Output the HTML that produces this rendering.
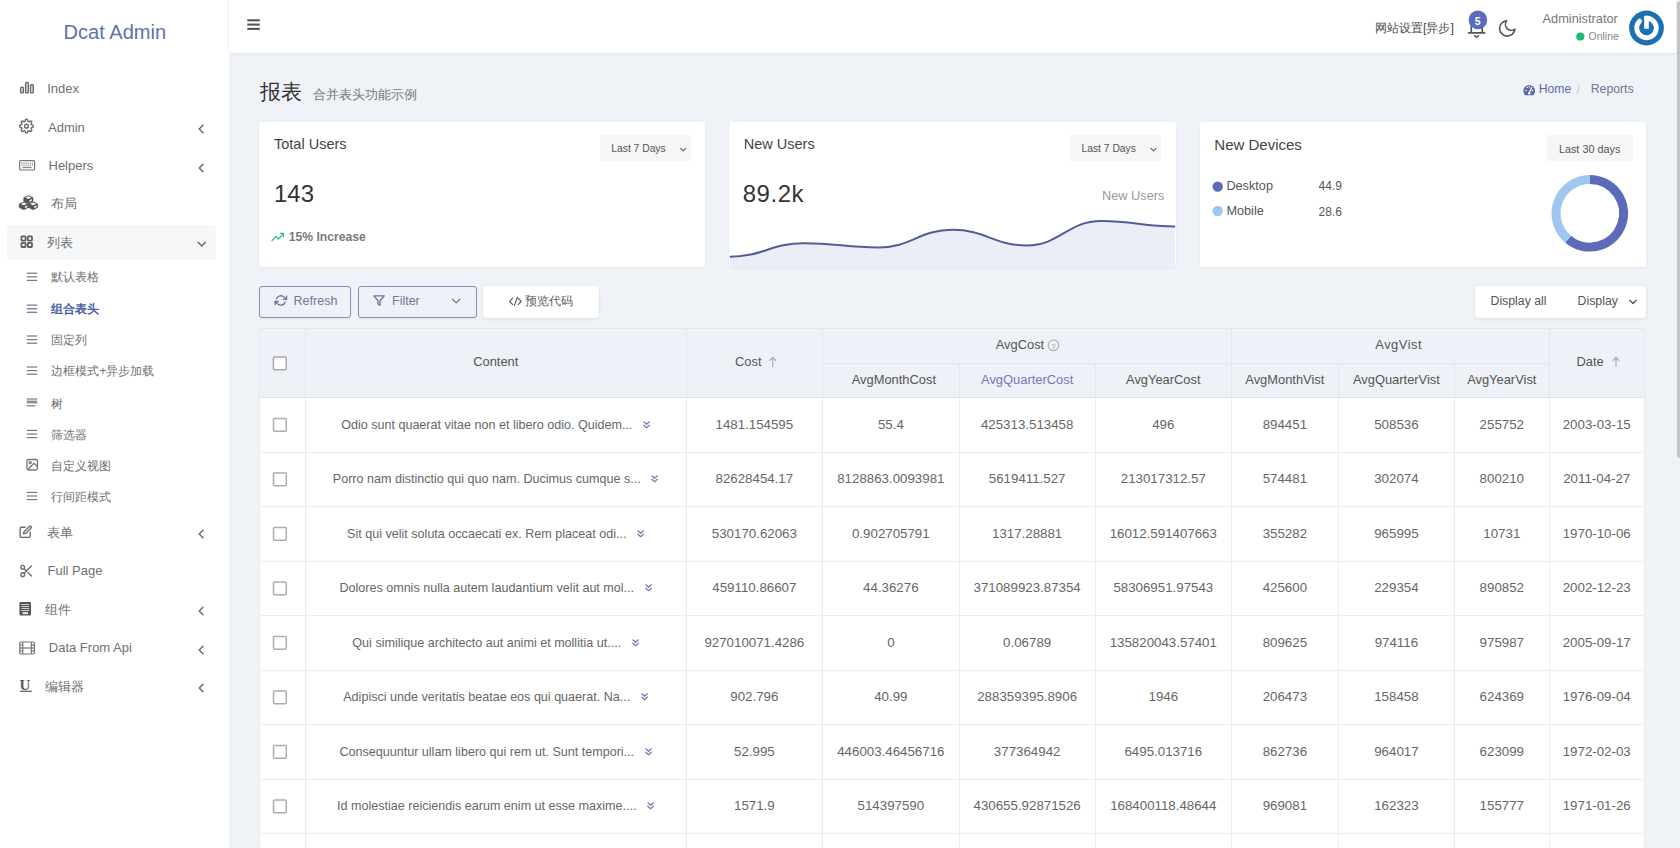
<!DOCTYPE html>
<html><head><meta charset="utf-8"><style>
*{box-sizing:border-box;margin:0;padding:0}
html,body{width:1680px;height:848px;overflow:hidden}
body{font-family:"Liberation Sans",sans-serif;background:#eff2f7;color:#666;position:relative}
.t{position:absolute;line-height:1;white-space:nowrap}
.tr{position:absolute;line-height:1;white-space:nowrap;text-align:right}
.tc{position:absolute;line-height:1;white-space:nowrap;text-align:center}
#side{position:absolute;left:0;top:0;width:229px;height:848px;background:#fff}
.hl{position:absolute;left:7px;top:225px;width:209px;height:35px;background:#f6f7f9;border-radius:3px}
#nav{position:absolute;left:229px;top:0;width:1447px;height:53px;background:#fff;box-shadow:0 1px 2px rgba(40,50,80,.07)}
#sb{position:absolute;left:1676.5px;top:1px;width:3.5px;height:457px;background:#c4c5c8;border-radius:3px 0 0 3px}
.card{position:absolute;top:122px;height:145px;width:446.3px;background:#fff;border-radius:3px;box-shadow:0 1px 3px rgba(40,50,80,.06)}
.dd{position:absolute;height:25.5px;background:#f6f6f6;border-radius:2px}
.btn{position:absolute;top:286px;height:31.5px;border-radius:3px}
svg{position:absolute;left:0;top:0;overflow:visible}
</style></head><body>
<div id="side"><div class="hl"></div>
<div class="t" style="left:63.5px;top:21.79px;font-size:20.1px;color:#6472a8;font-weight:normal;">Dcat Admin</div>
<div class="t" style="left:47.2px;top:81.80px;font-size:13px;color:#707070;font-weight:normal;">Index</div>
<div class="t" style="left:48px;top:120.50px;font-size:13px;color:#707070;font-weight:normal;">Admin</div>
<div class="t" style="left:48.5px;top:159.00px;font-size:13px;color:#707070;font-weight:normal;">Helpers</div>
<div class="t" style="left:51.3px;top:197.00px;font-size:13px;color:#707070;font-weight:normal;">布局</div>
<div class="t" style="left:47.2px;top:235.50px;font-size:13px;color:#707070;font-weight:normal;">列表</div>
<div class="t" style="left:46.6px;top:526.00px;font-size:13px;color:#707070;font-weight:normal;">表单</div>
<div class="t" style="left:47.5px;top:564.30px;font-size:13px;color:#707070;font-weight:normal;">Full Page</div>
<div class="t" style="left:44.9px;top:602.50px;font-size:13px;color:#707070;font-weight:normal;">组件</div>
<div class="t" style="left:48.8px;top:640.70px;font-size:13px;color:#707070;font-weight:normal;">Data From Api</div>
<div class="t" style="left:44.9px;top:680.00px;font-size:13px;color:#707070;font-weight:normal;">编辑器</div>
<div class="t" style="left:51.3px;top:271.47px;font-size:12.2px;color:#707070;font-weight:normal;">默认表格</div>
<div class="t" style="left:51.3px;top:303.37px;font-size:12.2px;color:#4a5fa6;font-weight:bold;">组合表头</div>
<div class="t" style="left:51.3px;top:334.27px;font-size:12.2px;color:#707070;font-weight:normal;">固定列</div>
<div class="t" style="left:51.3px;top:365.27px;font-size:12.2px;color:#707070;font-weight:normal;">边框模式+异步加载</div>
<div class="t" style="left:51.3px;top:397.67px;font-size:12.2px;color:#707070;font-weight:normal;">树</div>
<div class="t" style="left:51.3px;top:428.67px;font-size:12.2px;color:#707070;font-weight:normal;">筛选器</div>
<div class="t" style="left:51.3px;top:459.67px;font-size:12.2px;color:#707070;font-weight:normal;">自定义视图</div>
<div class="t" style="left:51.3px;top:490.67px;font-size:12.2px;color:#707070;font-weight:normal;">行间距模式</div>
<svg width="229" height="848"><g fill="none" stroke="#6b6b6b" stroke-width="1.5" stroke-linecap="round" stroke-linejoin="round"><rect x="20.7" y="87.3" width="2.6" height="5.5" rx="0.8"/><rect x="25.7" y="82.4" width="2.6" height="10.4" rx="0.8"/><rect x="30.6" y="84.8" width="2.6" height="8" rx="0.8"/></g><g transform="translate(19,118.7) scale(0.625)" fill="none" stroke="#6b6b6b" stroke-width="2.3" stroke-linecap="round" stroke-linejoin="round"><circle cx="12" cy="12" r="3"/><path d="M19.4 15a1.65 1.65 0 0 0 .33 1.820l.06.06a2 2 0 0 1 0 2.83 2 2 0 0 1-2.83 0l-.06-.06a1.65 1.65 0 0 0-1.820-.33 1.65 1.65 0 0 0-1 1.51V21a2 2 0 0 1-2 2 2 2 0 0 1-2-2v-.09A1.65 1.65 0 0 0 9 19.4a1.65 1.65 0 0 0-1.820.33l-.06.06a2 2 0 0 1-2.830 0 2 2 0 0 1 0-2.830l.06-.06a1.65 1.65 0 0 0 .33-1.820 1.65 1.65 0 0 0-1.51-1H3a2 2 0 0 1-2-2 2 2 0 0 1 2-2h.09A1.65 1.65 0 0 0 4.6 9a1.65 1.65 0 0 0-.33-1.820l-.06-.06a2 2 0 0 1 0-2.830 2 2 0 0 1 2.830 0l.06.06a1.65 1.65 0 0 0 1.820.33H9a1.65 1.65 0 0 0 1-1.51V3a2 2 0 0 1 2-2 2 2 0 0 1 2 2v.09a1.65 1.65 0 0 0 1 1.51 1.65 1.65 0 0 0 1.820-.33l.06-.06a2 2 0 0 1 2.830 0 2 2 0 0 1 0 2.830l-.06.06a1.65 1.65 0 0 0-.33 1.820V9a1.65 1.65 0 0 0 1.51 1H21a2 2 0 0 1 2 2 2 2 0 0 1-2 2h-.09a1.65 1.65 0 0 0-1.51 1z"/></g><g fill="none" stroke="#777" stroke-width="1.2"><rect x="19.6" y="160.6" width="15" height="9.4" rx="1"/></g><g fill="#888"><rect x="21.3" y="162.6" width="1.3" height="1.1"/><rect x="23.4" y="162.6" width="1.3" height="1.1"/><rect x="25.5" y="162.6" width="1.3" height="1.1"/><rect x="27.6" y="162.6" width="1.3" height="1.1"/><rect x="29.7" y="162.6" width="1.3" height="1.1"/><rect x="31.8" y="162.6" width="1.3" height="1.1"/><rect x="21.3" y="164.6" width="1.3" height="1.1"/><rect x="23.4" y="164.6" width="1.3" height="1.1"/><rect x="25.5" y="164.6" width="1.3" height="1.1"/><rect x="27.6" y="164.6" width="1.3" height="1.1"/><rect x="29.7" y="164.6" width="1.3" height="1.1"/><rect x="31.8" y="164.6" width="1.3" height="1.1"/><rect x="22.5" y="166.8" width="9" height="1.3"/></g><path d="M23.8 197.6 L28.4 195.4 L33.0 197.6 L33.0 201.20000000000002 L28.4 203.4 L23.8 201.20000000000002Z" fill="#555" stroke="#555" stroke-width="0.6" stroke-linejoin="round"/><path d="M25.400000000000002 197.6 L28.4 196.3 L31.4 197.6 L28.4 198.9Z" fill="#fff"/><path d="M29.5 200.2 L31.9 199.1 L31.9 200.60000000000002 L29.5 201.9Z" fill="#fff"/><path d="M19.2 203.89999999999998 L23.799999999999997 201.7 L28.4 203.89999999999998 L28.4 207.5 L23.799999999999997 209.7 L19.2 207.5Z" fill="#555" stroke="#555" stroke-width="0.6" stroke-linejoin="round"/><path d="M20.8 203.89999999999998 L23.799999999999997 202.6 L26.799999999999997 203.89999999999998 L23.799999999999997 205.2Z" fill="#fff"/><path d="M24.9 206.49999999999997 L27.299999999999997 205.39999999999998 L27.299999999999997 206.9 L24.9 208.2Z" fill="#fff"/><path d="M28.5 203.89999999999998 L33.1 201.7 L37.7 203.89999999999998 L37.7 207.5 L33.1 209.7 L28.5 207.5Z" fill="#555" stroke="#555" stroke-width="0.6" stroke-linejoin="round"/><path d="M30.1 203.89999999999998 L33.1 202.6 L36.1 203.89999999999998 L33.1 205.2Z" fill="#fff"/><path d="M34.2 206.49999999999997 L36.6 205.39999999999998 L36.6 206.9 L34.2 208.2Z" fill="#fff"/><g fill="none" stroke="#5f5f5f" stroke-width="1.8"><rect x="21.4" y="236.4" width="4.2" height="4.2" rx="0.8"/><rect x="27.8" y="236.4" width="4.2" height="4.2" rx="0.8"/><rect x="21.4" y="242.8" width="4.2" height="4.2" rx="0.8"/><rect x="27.8" y="242.8" width="4.2" height="4.2" rx="0.8"/></g><g stroke="#777" stroke-width="1.2"><line x1="26.8" y1="273.2" x2="37.2" y2="273.2"/><line x1="26.8" y1="276.8" x2="37.2" y2="276.8"/><line x1="26.8" y1="280.40000000000003" x2="37.2" y2="280.40000000000003"/></g><g stroke="#6b7394" stroke-width="1.2"><line x1="26.8" y1="305.09999999999997" x2="37.2" y2="305.09999999999997"/><line x1="26.8" y1="308.7" x2="37.2" y2="308.7"/><line x1="26.8" y1="312.3" x2="37.2" y2="312.3"/></g><g stroke="#777" stroke-width="1.2"><line x1="26.8" y1="336.0" x2="37.2" y2="336.0"/><line x1="26.8" y1="339.6" x2="37.2" y2="339.6"/><line x1="26.8" y1="343.20000000000005" x2="37.2" y2="343.20000000000005"/></g><g stroke="#777" stroke-width="1.2"><line x1="26.8" y1="367.0" x2="37.2" y2="367.0"/><line x1="26.8" y1="370.6" x2="37.2" y2="370.6"/><line x1="26.8" y1="374.20000000000005" x2="37.2" y2="374.20000000000005"/></g><g stroke="#777" stroke-width="1.2"><line x1="26.8" y1="399" x2="37.2" y2="399"/><line x1="26.8" y1="405.8" x2="35.5" y2="405.8"/></g><rect x="26.8" y="400.6" width="10.4" height="2.8" fill="#8a8a8a"/><g stroke="#777" stroke-width="1.2"><line x1="26.8" y1="430.4" x2="37.2" y2="430.4"/><line x1="26.8" y1="434" x2="37.2" y2="434"/><line x1="26.8" y1="437.6" x2="37.2" y2="437.6"/></g><g fill="none" stroke="#777" stroke-width="1.3" stroke-linejoin="round"><rect x="27" y="459.5" width="10.5" height="10.5" rx="1.5"/><circle cx="30.2" cy="462.6" r="1"/><path d="M37.3 466.5 L34 463.2 L27.5 469.8"/></g><g stroke="#777" stroke-width="1.2"><line x1="26.8" y1="492.4" x2="37.2" y2="492.4"/><line x1="26.8" y1="496" x2="37.2" y2="496"/><line x1="26.8" y1="499.6" x2="37.2" y2="499.6"/></g><g transform="translate(19,525) scale(0.56)" fill="none" stroke="#6b6b6b" stroke-width="2.4" stroke-linecap="round" stroke-linejoin="round"><path d="M11 4H4a2 2 0 0 0-2 2v14a2 2 0 0 0 2 2h14a2 2 0 0 0 2-2v-7"/><path d="M18.5 2.5a2.121 2.121 0 0 1 3 3L12 15l-4 1 1-4 9.5-9.5z"/></g><g transform="translate(19,563.5) scale(0.62)" fill="none" stroke="#6b6b6b" stroke-width="2.2" stroke-linecap="round" stroke-linejoin="round"><circle cx="6" cy="6" r="3"/><circle cx="6" cy="18" r="3"/><line x1="20" y1="4" x2="8.12" y2="15.88"/><line x1="14.47" y1="14.48" x2="20" y2="20"/><line x1="8.12" y1="8.12" x2="12" y2="12"/></g><rect x="19.5" y="602" width="11.5" height="13.5" rx="1" fill="#555"/><g stroke="#fff" stroke-width="0.7"><line x1="21.3" y1="604.5" x2="29.2" y2="604.5"/><line x1="21.3" y1="606.5" x2="29.2" y2="606.5"/><line x1="21.3" y1="608.5" x2="29.2" y2="608.5"/><line x1="21.3" y1="610.5" x2="29.2" y2="610.5"/></g><rect x="22.5" y="612" width="5.5" height="2.2" fill="#ddd"/><g fill="none" stroke="#777" stroke-width="1.2"><rect x="19.8" y="642" width="14.6" height="12" rx="1"/><line x1="22.8" y1="642" x2="22.8" y2="654"/><line x1="31.4" y1="642" x2="31.4" y2="654"/><line x1="19.8" y1="645" x2="22.8" y2="645"/><line x1="19.8" y1="648" x2="22.8" y2="648"/><line x1="19.8" y1="651" x2="22.8" y2="651"/><line x1="31.4" y1="645" x2="34.4" y2="645"/><line x1="31.4" y1="648" x2="34.4" y2="648"/><line x1="31.4" y1="651" x2="34.4" y2="651"/><line x1="22.8" y1="648" x2="31.4" y2="648"/></g><text x="19.6" y="689.5" font-family="Liberation Serif" font-weight="bold" font-size="15" fill="#5a5a5a">U</text><line x1="19.8" y1="691.3" x2="31.8" y2="691.3" stroke="#5a5a5a" stroke-width="1.2"/><g fill="none" stroke="#666" stroke-width="1.4" stroke-linecap="round" stroke-linejoin="round"><path d="M203 125.2 L199.2 129 L203 132.8"/><path d="M203 164.2 L199.2 168 L203 171.8"/><path d="M203 530.2 L199.2 534 L203 537.8"/><path d="M203 607.2 L199.2 611 L203 614.8"/><path d="M203 646.2 L199.2 650 L203 653.8"/><path d="M203 684.2 L199.2 688 L203 691.8"/><path d="M198.2 242.3 L201.8 246.1 L205.4 242.3"/></g></svg>
</div>
<div id="nav"></div><div style="position:absolute;left:228px;top:0;width:1px;height:53px;background:#f1f2f4"></div>
<svg width="1680" height="60"><g stroke="#555" stroke-width="2.1"><line x1="247.3" y1="20.3" x2="259.8" y2="20.3"/><line x1="247.3" y1="24.6" x2="259.8" y2="24.6"/><line x1="247.3" y1="28.9" x2="259.8" y2="28.9"/></g><g fill="none" stroke="#555" stroke-width="1.7" stroke-linecap="round"><path d="M1471.3 26 V32.6 M1482.3 26 V32.6 M1468.6 32.9 H1484.6"/><path d="M1474.6 35.6 L1476.6 37.3 L1478.6 35.6" stroke-width="1.4"/></g><circle cx="1477.9" cy="19.9" r="9.3" fill="#5b6bbf"/><text x="1477.7" y="24.6" text-anchor="middle" font-family="Liberation Sans" font-weight="bold" font-size="10.5" fill="#fff">5</text><g transform="translate(1497,18.2) scale(0.855)" fill="none" stroke="#555" stroke-width="1.9" stroke-linecap="round" stroke-linejoin="round"><path d="M21 12.79A9 9 0 1 1 11.21 3 7 7 0 0 0 21 12.79z"/></g><circle cx="1580.3" cy="36.6" r="4.1" fill="#21b978"/><circle cx="1646.5" cy="28.0" r="17.4" fill="#1b70b2"/><path d="M1646.50 18.25 A9.75 9.75 0 1 1 1639.61 21.11" fill="none" stroke="#fff" stroke-width="4.9" stroke-linecap="round"/><line x1="1646.5" y1="15.8" x2="1646.5" y2="28.8" stroke="#fff" stroke-width="4.6"/></svg>
<div class="t" style="left:1375px;top:21.99px;font-size:12.3px;color:#484848;font-weight:normal;">网站设置[异步]</div>
<div class="t" style="left:1542.5px;top:12.86px;font-size:12.8px;color:#777;font-weight:normal;">Administrator</div>
<div class="t" style="left:1588.5px;top:31.41px;font-size:10.5px;color:#888;font-weight:normal;">Online</div>
<div id="sb"></div>
<div class="t" style="left:259.5px;top:82.06px;font-size:20.6px;color:#333;font-weight:normal;">报表</div>
<div class="t" style="left:312.5px;top:87.91px;font-size:13.45px;color:#777;font-weight:normal;">合并表头功能示例</div>
<div class="t" style="left:1538.7px;top:83.47px;font-size:12.2px;color:#5b6aa8;font-weight:normal;">Home</div>
<div class="t" style="left:1576.5px;top:83.64px;font-size:12px;color:#c8c8c8;font-weight:normal;">/</div>
<div class="t" style="left:1590.8px;top:83.47px;font-size:12.2px;color:#6f7593;font-weight:normal;">Reports</div>
<div class="card" style="left:259px"></div>
<div class="card" style="left:729.3px"></div>
<div class="card" style="left:1199.7px"></div>
<div class="t" style="left:274px;top:136.63px;font-size:14.5px;color:#444;font-weight:normal;">Total Users</div>
<div class="t" style="left:274px;top:181.68px;font-size:24px;color:#333;font-weight:normal;">143</div>
<div class="t" style="left:288.8px;top:230.52px;font-size:12.15px;color:#7a7a7a;font-weight:bold;">15% Increase</div>
<div class="dd" style="left:600px;top:135px;width:91px"></div>
<div class="t" style="left:611.3px;top:144.18px;font-size:10.3px;color:#555;font-weight:normal;">Last 7 Days</div>
<div class="dd" style="left:1070px;top:135px;width:91px"></div>
<div class="t" style="left:1081.5px;top:144.18px;font-size:10.3px;color:#555;font-weight:normal;">Last 7 Days</div>
<div class="dd" style="left:1546.5px;top:135px;width:86px"></div>
<div class="t" style="left:1558.9px;top:143.82px;font-size:10.85px;color:#555;font-weight:normal;">Last 30 days</div>
<div class="t" style="left:743.8px;top:136.93px;font-size:14.5px;color:#444;font-weight:normal;">New Users</div>
<div class="t" style="left:742.7px;top:181.68px;font-size:24px;color:#333;font-weight:normal;letter-spacing:0.55px">89.2k</div>
<div class="t" style="left:1102px;top:189.51px;font-size:12.75px;color:#999;font-weight:normal;">New Users</div>
<div class="t" style="left:1214.3px;top:136.70px;font-size:15px;color:#444;font-weight:normal;">New Devices</div>
<div class="t" style="left:1226.4px;top:179.75px;font-size:12.7px;color:#555;font-weight:normal;">Desktop</div>
<div class="t" style="left:1226.4px;top:205.25px;font-size:12.7px;color:#555;font-weight:normal;">Mobile</div>
<div class="t" style="left:1318.5px;top:180.34px;font-size:12px;color:#555;font-weight:normal;">44.9</div>
<div class="t" style="left:1318.5px;top:205.84px;font-size:12px;color:#555;font-weight:normal;">28.6</div>
<svg width="1680" height="848"><path d="M680.6 148.3 L683.2 150.9 L685.8000000000001 148.3" fill="none" stroke="#666" stroke-width="1.2" stroke-linecap="round" stroke-linejoin="round"/><path d="M1150.9 148.3 L1153.5 150.9 L1156.1 148.3" fill="none" stroke="#666" stroke-width="1.2" stroke-linecap="round" stroke-linejoin="round"/><path d="M272 240.5 L276 236.5 L278.5 239 L283.5 233.5 M280.3 233.3 H283.6 V236.6" fill="none" stroke="#3bb98a" stroke-width="1.2" stroke-linecap="round" stroke-linejoin="round"/><path d="M729.8 256.7 C763.2 256.7 770.6 243.2 804.0 243.2 C837.4 243.2 844.9 247.5 878.3 247.5 C911.7 247.5 919.1 229.8 952.5 229.8 C985.9 229.8 993.3 245.4 1026.7 245.4 C1060.1 245.4 1067.5 221.0 1100.9 221.0 C1134.3 221.0 1141.8 226.5 1175.2 226.5 L1175.2 267.5 L729.8 267.5Z" fill="#eceef7"/><path d="M729.8 256.7 C763.2 256.7 770.6 243.2 804.0 243.2 C837.4 243.2 844.9 247.5 878.3 247.5 C911.7 247.5 919.1 229.8 952.5 229.8 C985.9 229.8 993.3 245.4 1026.7 245.4 C1060.1 245.4 1067.5 221.0 1100.9 221.0 C1134.3 221.0 1141.8 226.5 1175.2 226.5" fill="none" stroke="#535c98" stroke-width="2"/><circle cx="1217.7" cy="186.6" r="5.2" fill="#5b6bb8"/><circle cx="1217.7" cy="211" r="5.2" fill="#9ec6ee"/><path d="M1589.80 179.50 A33.8 33.8 0 1 1 1568.11 239.22" fill="none" stroke="#5b6bb8" stroke-width="9"/><path d="M1568.11 239.22 A33.8 33.8 0 0 1 1589.80 179.50" fill="none" stroke="#9ec6ee" stroke-width="9"/><path d="M1525.1 95.2 A5.9 5.9 0 1 1 1533.3 95.2 Z" fill="#5b6aa8"/><g fill="#fff"><circle cx="1525.9" cy="90.6" r="0.75"/><circle cx="1527.1" cy="87.6" r="0.75"/><circle cx="1529.2" cy="86.7" r="0.75"/><circle cx="1532.5" cy="90.6" r="0.75"/></g><path d="M1529.2 93.2 L1531.6 87.6" stroke="#fff" stroke-width="1.3" stroke-linecap="round"/><circle cx="1529.2" cy="93.3" r="1.2" fill="#fff"/></svg>
<div class="btn" style="left:259.3px;width:92.1px;border:1px solid #8790b0;background:#eef1f8;box-shadow:0 1px 2px rgba(0,0,0,.06)"></div>
<div class="btn" style="left:358px;width:119px;border:1px solid #8790b0;background:#eef1f8;box-shadow:0 1px 2px rgba(0,0,0,.06)"></div>
<div class="btn" style="left:483.3px;width:116px;background:#fff;box-shadow:0 1px 3px rgba(40,50,80,.12)"></div>
<div class="btn" style="left:1474.7px;width:171px;background:#fff;box-shadow:0 1px 3px rgba(40,50,80,.12)"></div>
<div class="t" style="left:293.6px;top:295.12px;font-size:12.5px;color:#6f7899;font-weight:normal;">Refresh</div>
<div class="t" style="left:392px;top:295.12px;font-size:12.5px;color:#6f7899;font-weight:normal;">Filter</div>
<div class="t" style="left:525px;top:295.49px;font-size:12.3px;color:#606060;font-weight:normal;">预览代码</div>
<div class="t" style="left:1490.5px;top:295.09px;font-size:12.3px;color:#555;font-weight:normal;">Display all</div>
<div class="t" style="left:1577.6px;top:295.09px;font-size:12.3px;color:#555;font-weight:normal;">Display</div>
<svg width="1680" height="848"><g transform="translate(274.6,294.2) scale(0.52)" fill="none" stroke="#6f7899" stroke-width="2.6" stroke-linecap="round" stroke-linejoin="round"><polyline points="23 4 23 10 17 10"/><polyline points="1 20 1 14 7 14"/><path d="M3.51 9a9 9 0 0 1 14.85-3.36L23 10M1 14l4.64 4.36A9 9 0 0 0 20.49 15"/></g><g transform="translate(372.8,294.3) scale(0.52)" fill="none" stroke="#6f7899" stroke-width="2.6" stroke-linecap="round" stroke-linejoin="round"><polygon points="22 3 2 3 10 12.46 10 19 14 21 14 12.46 22 3"/></g><path d="M452.6 299.3 L456.2 302.9 L459.8 299.3" fill="none" stroke="#6f7899" stroke-width="1.3" stroke-linecap="round" stroke-linejoin="round"/><path d="M512.7 298.2 L509.6 301.4 L512.7 304.6 M517.3 297.4 L514.5 305.4 M518.1 298.2 L521.2 301.4 L518.1 304.6" fill="none" stroke="#555" stroke-width="1.15" stroke-linecap="round" stroke-linejoin="round"/><path d="M1629.8 300.3 L1633 303.5 L1636.2 300.3" fill="none" stroke="#555" stroke-width="1.3" stroke-linecap="round" stroke-linejoin="round"/></svg>
<div style="position:absolute;left:259.2px;top:328px;width:1385.1px;height:69.5px;background:#eef1f7"></div>
<div style="position:absolute;left:259.2px;top:397.5px;width:1385.1px;height:450.5px;background:#fff"></div>
<svg width="1680" height="848" shape-rendering="crispEdges"><line x1="259.2" y1="328.5" x2="1644.3" y2="328.5" stroke="#e4e6ec"/><line x1="259.2" y1="397.5" x2="1644.3" y2="397.5" stroke="#dfe2e8"/><line x1="822.7" y1="363" x2="1549.2" y2="363" stroke="#e4e6ec"/><line x1="259.2" y1="328" x2="259.2" y2="397.5" stroke="#e4e6ec"/><line x1="305.5" y1="328" x2="305.5" y2="397.5" stroke="#e4e6ec"/><line x1="686" y1="328" x2="686" y2="397.5" stroke="#e4e6ec"/><line x1="822.7" y1="328" x2="822.7" y2="397.5" stroke="#e4e6ec"/><line x1="959" y1="363" x2="959" y2="397.5" stroke="#e4e6ec"/><line x1="1095.3" y1="363" x2="1095.3" y2="397.5" stroke="#e4e6ec"/><line x1="1231.3" y1="328" x2="1231.3" y2="397.5" stroke="#e4e6ec"/><line x1="1338.4" y1="363" x2="1338.4" y2="397.5" stroke="#e4e6ec"/><line x1="1454.4" y1="363" x2="1454.4" y2="397.5" stroke="#e4e6ec"/><line x1="1549.2" y1="328" x2="1549.2" y2="397.5" stroke="#e4e6ec"/><line x1="1644.3" y1="328" x2="1644.3" y2="397.5" stroke="#e4e6ec"/><line x1="259.2" y1="397.5" x2="259.2" y2="848" stroke="#ececef"/><line x1="305.5" y1="397.5" x2="305.5" y2="848" stroke="#ececef"/><line x1="686" y1="397.5" x2="686" y2="848" stroke="#ececef"/><line x1="822.7" y1="397.5" x2="822.7" y2="848" stroke="#ececef"/><line x1="959" y1="397.5" x2="959" y2="848" stroke="#ececef"/><line x1="1095.3" y1="397.5" x2="1095.3" y2="848" stroke="#ececef"/><line x1="1231.3" y1="397.5" x2="1231.3" y2="848" stroke="#ececef"/><line x1="1338.4" y1="397.5" x2="1338.4" y2="848" stroke="#ececef"/><line x1="1454.4" y1="397.5" x2="1454.4" y2="848" stroke="#ececef"/><line x1="1549.2" y1="397.5" x2="1549.2" y2="848" stroke="#ececef"/><line x1="1644.3" y1="397.5" x2="1644.3" y2="848" stroke="#ececef"/><line x1="259.2" y1="452.0" x2="1644.3" y2="452.0" stroke="#ececef"/><line x1="259.2" y1="506.5" x2="1644.3" y2="506.5" stroke="#ececef"/><line x1="259.2" y1="561.0" x2="1644.3" y2="561.0" stroke="#ececef"/><line x1="259.2" y1="615.5" x2="1644.3" y2="615.5" stroke="#ececef"/><line x1="259.2" y1="670.0" x2="1644.3" y2="670.0" stroke="#ececef"/><line x1="259.2" y1="724.5" x2="1644.3" y2="724.5" stroke="#ececef"/><line x1="259.2" y1="779.0" x2="1644.3" y2="779.0" stroke="#ececef"/><line x1="259.2" y1="833.5" x2="1644.3" y2="833.5" stroke="#ececef"/></svg>
<div class="tc" style="left:305.5px;width:380.5px;top:355.88px;font-size:12.9px;color:#555;">Content</div>
<div class="t" style="left:735px;top:355.88px;font-size:12.9px;color:#555;font-weight:normal;">Cost</div>
<div class="t" style="left:995.7px;top:338.58px;font-size:12.9px;color:#555;font-weight:normal;">AvgCost</div>
<div class="t" style="left:851.7px;top:373.58px;font-size:12.9px;color:#555;font-weight:normal;">AvgMonthCost</div>
<div class="tc" style="left:959px;width:136.29999999999995px;top:373.58px;font-size:12.9px;color:#7479b5;">AvgQuarterCost</div>
<div class="tc" style="left:1095.3px;width:136.0px;top:373.58px;font-size:12.9px;color:#555;">AvgYearCost</div>
<div class="t" style="left:1375.3px;top:338.58px;font-size:12.9px;color:#555;font-weight:normal;letter-spacing:0.5px">AvgVist</div>
<div class="tc" style="left:1231.3px;width:107.10000000000014px;top:373.58px;font-size:12.9px;color:#555;">AvgMonthVist</div>
<div class="tc" style="left:1338.4px;width:116.0px;top:373.58px;font-size:12.9px;color:#555;">AvgQuarterVist</div>
<div class="tc" style="left:1454.4px;width:94.79999999999995px;top:373.58px;font-size:12.9px;color:#555;">AvgYearVist</div>
<div class="t" style="left:1576.5px;top:355.88px;font-size:12.9px;color:#555;font-weight:normal;">Date</div>
<div class="tc" style="left:305.5px;width:380.5px;top:418.61px;font-size:12.57px;color:#666">Odio sunt quaerat vitae non et libero odio. Quidem...<span style="display:inline-block;width:18px;position:relative"><svg width="8" height="8" style="left:10.5px;top:-8px"><path d="M0.8 0.8 L3.6 3.3 L6.4 0.8 M0.8 4.2 L3.6 6.7 L6.4 4.2" fill="none" stroke="#7479b5" stroke-width="1.2" stroke-linecap="round" stroke-linejoin="round"/></svg></span></div>
<div class="tc" style="left:686px;width:136.70000000000005px;top:417.99px;font-size:13.3px;color:#666;">1481.154595</div>
<div class="tc" style="left:822.7px;width:136.29999999999995px;top:417.99px;font-size:13.3px;color:#666;">55.4</div>
<div class="tc" style="left:959px;width:136.29999999999995px;top:417.99px;font-size:13.3px;color:#666;">425313.513458</div>
<div class="tc" style="left:1095.3px;width:136.0px;top:417.99px;font-size:13.3px;color:#666;">496</div>
<div class="tc" style="left:1231.3px;width:107.10000000000014px;top:417.99px;font-size:13.3px;color:#666;">894451</div>
<div class="tc" style="left:1338.4px;width:116.0px;top:417.99px;font-size:13.3px;color:#666;">508536</div>
<div class="tc" style="left:1454.4px;width:94.79999999999995px;top:417.99px;font-size:13.3px;color:#666;">255752</div>
<div class="tc" style="left:1549.2px;width:95.09999999999991px;top:417.99px;font-size:13.3px;color:#666;">2003-03-15</div>
<div class="tc" style="left:305.5px;width:380.5px;top:473.11px;font-size:12.57px;color:#666">Porro nam distinctio qui quo nam. Ducimus cumque s...<span style="display:inline-block;width:18px;position:relative"><svg width="8" height="8" style="left:10.5px;top:-8px"><path d="M0.8 0.8 L3.6 3.3 L6.4 0.8 M0.8 4.2 L3.6 6.7 L6.4 4.2" fill="none" stroke="#7479b5" stroke-width="1.2" stroke-linecap="round" stroke-linejoin="round"/></svg></span></div>
<div class="tc" style="left:686px;width:136.70000000000005px;top:472.49px;font-size:13.3px;color:#666;">82628454.17</div>
<div class="tc" style="left:822.7px;width:136.29999999999995px;top:472.49px;font-size:13.3px;color:#666;">8128863.0093981</div>
<div class="tc" style="left:959px;width:136.29999999999995px;top:472.49px;font-size:13.3px;color:#666;">5619411.527</div>
<div class="tc" style="left:1095.3px;width:136.0px;top:472.49px;font-size:13.3px;color:#666;">213017312.57</div>
<div class="tc" style="left:1231.3px;width:107.10000000000014px;top:472.49px;font-size:13.3px;color:#666;">574481</div>
<div class="tc" style="left:1338.4px;width:116.0px;top:472.49px;font-size:13.3px;color:#666;">302074</div>
<div class="tc" style="left:1454.4px;width:94.79999999999995px;top:472.49px;font-size:13.3px;color:#666;">800210</div>
<div class="tc" style="left:1549.2px;width:95.09999999999991px;top:472.49px;font-size:13.3px;color:#666;">2011-04-27</div>
<div class="tc" style="left:305.5px;width:380.5px;top:527.61px;font-size:12.57px;color:#666">Sit qui velit soluta occaecati ex. Rem placeat odi...<span style="display:inline-block;width:18px;position:relative"><svg width="8" height="8" style="left:10.5px;top:-8px"><path d="M0.8 0.8 L3.6 3.3 L6.4 0.8 M0.8 4.2 L3.6 6.7 L6.4 4.2" fill="none" stroke="#7479b5" stroke-width="1.2" stroke-linecap="round" stroke-linejoin="round"/></svg></span></div>
<div class="tc" style="left:686px;width:136.70000000000005px;top:526.99px;font-size:13.3px;color:#666;">530170.62063</div>
<div class="tc" style="left:822.7px;width:136.29999999999995px;top:526.99px;font-size:13.3px;color:#666;">0.902705791</div>
<div class="tc" style="left:959px;width:136.29999999999995px;top:526.99px;font-size:13.3px;color:#666;">1317.28881</div>
<div class="tc" style="left:1095.3px;width:136.0px;top:526.99px;font-size:13.3px;color:#666;">16012.591407663</div>
<div class="tc" style="left:1231.3px;width:107.10000000000014px;top:526.99px;font-size:13.3px;color:#666;">355282</div>
<div class="tc" style="left:1338.4px;width:116.0px;top:526.99px;font-size:13.3px;color:#666;">965995</div>
<div class="tc" style="left:1454.4px;width:94.79999999999995px;top:526.99px;font-size:13.3px;color:#666;">10731</div>
<div class="tc" style="left:1549.2px;width:95.09999999999991px;top:526.99px;font-size:13.3px;color:#666;">1970-10-06</div>
<div class="tc" style="left:305.5px;width:380.5px;top:582.11px;font-size:12.57px;color:#666">Dolores omnis nulla autem laudantium velit aut mol...<span style="display:inline-block;width:18px;position:relative"><svg width="8" height="8" style="left:10.5px;top:-8px"><path d="M0.8 0.8 L3.6 3.3 L6.4 0.8 M0.8 4.2 L3.6 6.7 L6.4 4.2" fill="none" stroke="#7479b5" stroke-width="1.2" stroke-linecap="round" stroke-linejoin="round"/></svg></span></div>
<div class="tc" style="left:686px;width:136.70000000000005px;top:581.49px;font-size:13.3px;color:#666;">459110.86607</div>
<div class="tc" style="left:822.7px;width:136.29999999999995px;top:581.49px;font-size:13.3px;color:#666;">44.36276</div>
<div class="tc" style="left:959px;width:136.29999999999995px;top:581.49px;font-size:13.3px;color:#666;">371089923.87354</div>
<div class="tc" style="left:1095.3px;width:136.0px;top:581.49px;font-size:13.3px;color:#666;">58306951.97543</div>
<div class="tc" style="left:1231.3px;width:107.10000000000014px;top:581.49px;font-size:13.3px;color:#666;">425600</div>
<div class="tc" style="left:1338.4px;width:116.0px;top:581.49px;font-size:13.3px;color:#666;">229354</div>
<div class="tc" style="left:1454.4px;width:94.79999999999995px;top:581.49px;font-size:13.3px;color:#666;">890852</div>
<div class="tc" style="left:1549.2px;width:95.09999999999991px;top:581.49px;font-size:13.3px;color:#666;">2002-12-23</div>
<div class="tc" style="left:305.5px;width:380.5px;top:636.61px;font-size:12.57px;color:#666">Qui similique architecto aut animi et mollitia ut....<span style="display:inline-block;width:18px;position:relative"><svg width="8" height="8" style="left:10.5px;top:-8px"><path d="M0.8 0.8 L3.6 3.3 L6.4 0.8 M0.8 4.2 L3.6 6.7 L6.4 4.2" fill="none" stroke="#7479b5" stroke-width="1.2" stroke-linecap="round" stroke-linejoin="round"/></svg></span></div>
<div class="tc" style="left:686px;width:136.70000000000005px;top:635.99px;font-size:13.3px;color:#666;">927010071.4286</div>
<div class="tc" style="left:822.7px;width:136.29999999999995px;top:635.99px;font-size:13.3px;color:#666;">0</div>
<div class="tc" style="left:959px;width:136.29999999999995px;top:635.99px;font-size:13.3px;color:#666;">0.06789</div>
<div class="tc" style="left:1095.3px;width:136.0px;top:635.99px;font-size:13.3px;color:#666;">135820043.57401</div>
<div class="tc" style="left:1231.3px;width:107.10000000000014px;top:635.99px;font-size:13.3px;color:#666;">809625</div>
<div class="tc" style="left:1338.4px;width:116.0px;top:635.99px;font-size:13.3px;color:#666;">974116</div>
<div class="tc" style="left:1454.4px;width:94.79999999999995px;top:635.99px;font-size:13.3px;color:#666;">975987</div>
<div class="tc" style="left:1549.2px;width:95.09999999999991px;top:635.99px;font-size:13.3px;color:#666;">2005-09-17</div>
<div class="tc" style="left:305.5px;width:380.5px;top:691.11px;font-size:12.57px;color:#666">Adipisci unde veritatis beatae eos qui quaerat. Na...<span style="display:inline-block;width:18px;position:relative"><svg width="8" height="8" style="left:10.5px;top:-8px"><path d="M0.8 0.8 L3.6 3.3 L6.4 0.8 M0.8 4.2 L3.6 6.7 L6.4 4.2" fill="none" stroke="#7479b5" stroke-width="1.2" stroke-linecap="round" stroke-linejoin="round"/></svg></span></div>
<div class="tc" style="left:686px;width:136.70000000000005px;top:690.49px;font-size:13.3px;color:#666;">902.796</div>
<div class="tc" style="left:822.7px;width:136.29999999999995px;top:690.49px;font-size:13.3px;color:#666;">40.99</div>
<div class="tc" style="left:959px;width:136.29999999999995px;top:690.49px;font-size:13.3px;color:#666;">288359395.8906</div>
<div class="tc" style="left:1095.3px;width:136.0px;top:690.49px;font-size:13.3px;color:#666;">1946</div>
<div class="tc" style="left:1231.3px;width:107.10000000000014px;top:690.49px;font-size:13.3px;color:#666;">206473</div>
<div class="tc" style="left:1338.4px;width:116.0px;top:690.49px;font-size:13.3px;color:#666;">158458</div>
<div class="tc" style="left:1454.4px;width:94.79999999999995px;top:690.49px;font-size:13.3px;color:#666;">624369</div>
<div class="tc" style="left:1549.2px;width:95.09999999999991px;top:690.49px;font-size:13.3px;color:#666;">1976-09-04</div>
<div class="tc" style="left:305.5px;width:380.5px;top:745.61px;font-size:12.57px;color:#666">Consequuntur ullam libero qui rem ut. Sunt tempori...<span style="display:inline-block;width:18px;position:relative"><svg width="8" height="8" style="left:10.5px;top:-8px"><path d="M0.8 0.8 L3.6 3.3 L6.4 0.8 M0.8 4.2 L3.6 6.7 L6.4 4.2" fill="none" stroke="#7479b5" stroke-width="1.2" stroke-linecap="round" stroke-linejoin="round"/></svg></span></div>
<div class="tc" style="left:686px;width:136.70000000000005px;top:744.99px;font-size:13.3px;color:#666;">52.995</div>
<div class="tc" style="left:822.7px;width:136.29999999999995px;top:744.99px;font-size:13.3px;color:#666;">446003.46456716</div>
<div class="tc" style="left:959px;width:136.29999999999995px;top:744.99px;font-size:13.3px;color:#666;">377364942</div>
<div class="tc" style="left:1095.3px;width:136.0px;top:744.99px;font-size:13.3px;color:#666;">6495.013716</div>
<div class="tc" style="left:1231.3px;width:107.10000000000014px;top:744.99px;font-size:13.3px;color:#666;">862736</div>
<div class="tc" style="left:1338.4px;width:116.0px;top:744.99px;font-size:13.3px;color:#666;">964017</div>
<div class="tc" style="left:1454.4px;width:94.79999999999995px;top:744.99px;font-size:13.3px;color:#666;">623099</div>
<div class="tc" style="left:1549.2px;width:95.09999999999991px;top:744.99px;font-size:13.3px;color:#666;">1972-02-03</div>
<div class="tc" style="left:305.5px;width:380.5px;top:800.11px;font-size:12.57px;color:#666">Id molestiae reiciendis earum enim ut esse maxime....<span style="display:inline-block;width:18px;position:relative"><svg width="8" height="8" style="left:10.5px;top:-8px"><path d="M0.8 0.8 L3.6 3.3 L6.4 0.8 M0.8 4.2 L3.6 6.7 L6.4 4.2" fill="none" stroke="#7479b5" stroke-width="1.2" stroke-linecap="round" stroke-linejoin="round"/></svg></span></div>
<div class="tc" style="left:686px;width:136.70000000000005px;top:799.49px;font-size:13.3px;color:#666;">1571.9</div>
<div class="tc" style="left:822.7px;width:136.29999999999995px;top:799.49px;font-size:13.3px;color:#666;">514397590</div>
<div class="tc" style="left:959px;width:136.29999999999995px;top:799.49px;font-size:13.3px;color:#666;">430655.92871526</div>
<div class="tc" style="left:1095.3px;width:136.0px;top:799.49px;font-size:13.3px;color:#666;">168400118.48644</div>
<div class="tc" style="left:1231.3px;width:107.10000000000014px;top:799.49px;font-size:13.3px;color:#666;">969081</div>
<div class="tc" style="left:1338.4px;width:116.0px;top:799.49px;font-size:13.3px;color:#666;">162323</div>
<div class="tc" style="left:1454.4px;width:94.79999999999995px;top:799.49px;font-size:13.3px;color:#666;">155777</div>
<div class="tc" style="left:1549.2px;width:95.09999999999991px;top:799.49px;font-size:13.3px;color:#666;">1971-01-26</div>
<svg width="1680" height="848"><path d="M772.8 366.5 V357.5 M769.8 360.5 L772.8 357.3 L775.8 360.5" fill="none" stroke="#aaa" stroke-width="1.1" stroke-linecap="round" stroke-linejoin="round"/><path d="M1616 366.5 V357.5 M1613 360.5 L1616 357.3 L1619 360.5" fill="none" stroke="#aaa" stroke-width="1.1" stroke-linecap="round" stroke-linejoin="round"/><circle cx="1053.5" cy="345.3" r="5.3" fill="none" stroke="#aaa" stroke-width="1.1"/><text x="1053.5" y="348.6" text-anchor="middle" font-family="Liberation Sans" font-size="8" fill="#999">?</text><rect x="273.4" y="356.9" width="12.8" height="12.8" rx="1" fill="#fff" stroke="#a9a9a9" stroke-width="1.5"/><rect x="273.5" y="418.45" width="12.8" height="12.8" rx="1" fill="#fff" stroke="#adadad" stroke-width="1.5"/><rect x="273.5" y="472.95" width="12.8" height="12.8" rx="1" fill="#fff" stroke="#adadad" stroke-width="1.5"/><rect x="273.5" y="527.45" width="12.8" height="12.8" rx="1" fill="#fff" stroke="#adadad" stroke-width="1.5"/><rect x="273.5" y="581.95" width="12.8" height="12.8" rx="1" fill="#fff" stroke="#adadad" stroke-width="1.5"/><rect x="273.5" y="636.45" width="12.8" height="12.8" rx="1" fill="#fff" stroke="#adadad" stroke-width="1.5"/><rect x="273.5" y="690.95" width="12.8" height="12.8" rx="1" fill="#fff" stroke="#adadad" stroke-width="1.5"/><rect x="273.5" y="745.45" width="12.8" height="12.8" rx="1" fill="#fff" stroke="#adadad" stroke-width="1.5"/><rect x="273.5" y="799.95" width="12.8" height="12.8" rx="1" fill="#fff" stroke="#adadad" stroke-width="1.5"/><rect x="273.5" y="854.45" width="12.8" height="12.8" rx="1" fill="#fff" stroke="#adadad" stroke-width="1.5"/></svg>
</body></html>
